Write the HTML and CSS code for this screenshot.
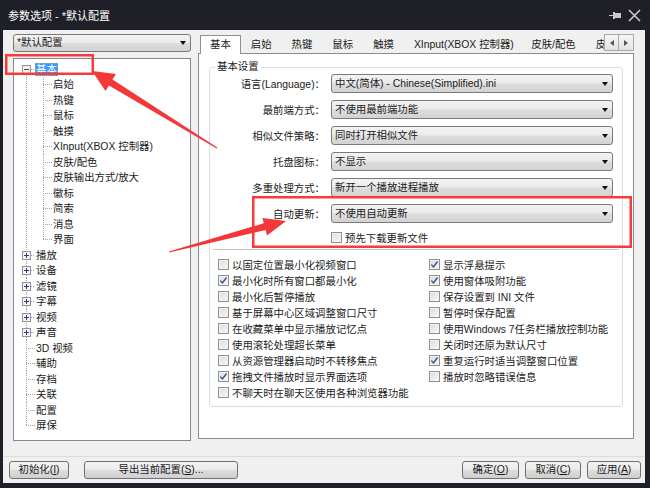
FILE: index.html
```html
<!DOCTYPE html>
<html lang="zh-CN">
<head>
<meta charset="utf-8">
<title>参数选项</title>
<link rel="stylesheet" href="styles.css">
</head>
<body>
<div class="window">
  <div class="titlebar">
    <span class="title">参数选项 - *默认配置</span>
    <span class="tb-icons">
      <svg class="pin" width="13" height="9" viewBox="0 0 13 9"><path d="M0 4.5h5" stroke="#c9c9c9" stroke-width="1"/><rect x="4" y="1" width="2" height="7" fill="#c9c9c9"/><rect x="6" y="2" width="6" height="5" fill="#c9c9c9"/></svg>
      <svg class="close" width="13" height="13" viewBox="0 0 13 13"><path d="M1 1L12 12M12 1L1 12" stroke="#d0d0d0" stroke-width="1.5"/></svg>
    </span>
  </div>
  <div class="client">
    <div class="main">
      <div class="leftcol">
        <div class="combo"><span>*默认配置</span><i class="caret"></i></div>
        <div class="tree">
          <ul class="t0">
            <li class="first">
              <div class="row"><span class="sp8"></span><svg class="exp" width="9" height="9" viewBox="0 0 9 9"><rect x=".5" y=".5" width="8" height="8" fill="#f3f3f3" stroke="#939393"/><path d="M2 4.5h5" stroke="#4a4a4a"/></svg><span class="h4"></span><span class="lbl sel">基本</span></div>
              <ul class="t1">
                <li><div class="row"><span class="sp29"></span><span class="h9"></span><span class="lbl">启始</span></div></li>
                <li><div class="row"><span class="sp29"></span><span class="h9"></span><span class="lbl">热键</span></div></li>
                <li><div class="row"><span class="sp29"></span><span class="h9"></span><span class="lbl">鼠标</span></div></li>
                <li><div class="row"><span class="sp29"></span><span class="h9"></span><span class="lbl">触摸</span></div></li>
                <li><div class="row"><span class="sp29"></span><span class="h9"></span><span class="lbl">XInput(XBOX 控制器)</span></div></li>
                <li><div class="row"><span class="sp29"></span><span class="h9"></span><span class="lbl">皮肤/配色</span></div></li>
                <li><div class="row"><span class="sp29"></span><span class="h9"></span><span class="lbl">皮肤输出方式/放大</span></div></li>
                <li><div class="row"><span class="sp29"></span><span class="h9"></span><span class="lbl">徽标</span></div></li>
                <li><div class="row"><span class="sp29"></span><span class="h9"></span><span class="lbl">简索</span></div></li>
                <li><div class="row"><span class="sp29"></span><span class="h9"></span><span class="lbl">消息</span></div></li>
                <li class="last"><div class="row"><span class="sp29"></span><span class="h9"></span><span class="lbl">界面</span></div></li>
              </ul>
            </li>
            <li><div class="row"><span class="sp8"></span><svg class="exp" width="9" height="9" viewBox="0 0 9 9"><rect x=".5" y=".5" width="8" height="8" fill="#f3f3f3" stroke="#939393"/><path d="M2 4.5h5M4.5 2v5" stroke="#22438c"/></svg><span class="h4"></span><span class="lbl">播放</span></div></li>
            <li><div class="row"><span class="sp8"></span><svg class="exp" width="9" height="9" viewBox="0 0 9 9"><rect x=".5" y=".5" width="8" height="8" fill="#f3f3f3" stroke="#939393"/><path d="M2 4.5h5M4.5 2v5" stroke="#22438c"/></svg><span class="h4"></span><span class="lbl">设备</span></div></li>
            <li><div class="row"><span class="sp8"></span><svg class="exp" width="9" height="9" viewBox="0 0 9 9"><rect x=".5" y=".5" width="8" height="8" fill="#f3f3f3" stroke="#939393"/><path d="M2 4.5h5M4.5 2v5" stroke="#22438c"/></svg><span class="h4"></span><span class="lbl">滤镜</span></div></li>
            <li><div class="row"><span class="sp8"></span><svg class="exp" width="9" height="9" viewBox="0 0 9 9"><rect x=".5" y=".5" width="8" height="8" fill="#f3f3f3" stroke="#939393"/><path d="M2 4.5h5M4.5 2v5" stroke="#22438c"/></svg><span class="h4"></span><span class="lbl">字幕</span></div></li>
            <li><div class="row"><span class="sp8"></span><svg class="exp" width="9" height="9" viewBox="0 0 9 9"><rect x=".5" y=".5" width="8" height="8" fill="#f3f3f3" stroke="#939393"/><path d="M2 4.5h5M4.5 2v5" stroke="#22438c"/></svg><span class="h4"></span><span class="lbl">视频</span></div></li>
            <li><div class="row"><span class="sp8"></span><svg class="exp" width="9" height="9" viewBox="0 0 9 9"><rect x=".5" y=".5" width="8" height="8" fill="#f3f3f3" stroke="#939393"/><path d="M2 4.5h5M4.5 2v5" stroke="#22438c"/></svg><span class="h4"></span><span class="lbl">声音</span></div></li>
            <li><div class="row"><span class="sp12"></span><span class="h9"></span><span class="lbl">3D 视频</span></div></li>
            <li><div class="row"><span class="sp12"></span><span class="h9"></span><span class="lbl">辅助</span></div></li>
            <li><div class="row"><span class="sp12"></span><span class="h9"></span><span class="lbl">存档</span></div></li>
            <li><div class="row"><span class="sp12"></span><span class="h9"></span><span class="lbl">关联</span></div></li>
            <li><div class="row"><span class="sp12"></span><span class="h9"></span><span class="lbl">配置</span></div></li>
            <li class="last"><div class="row"><span class="sp12"></span><span class="h9"></span><span class="lbl">屏保</span></div></li>
          </ul>
        </div>
      </div>
      <div class="rightcol">
        <div class="tabbar">
          <div class="tabs">
            <span class="tab active">基本</span>
            <span class="tab">启始</span>
            <span class="tab">热键</span>
            <span class="tab">鼠标</span>
            <span class="tab">触摸</span>
            <span class="tab tab-x">XInput(XBOX 控制器)</span>
            <span class="tab">皮肤/配色</span>
            <span class="tab">皮肤输出方式/放大</span>
          </div>
          <div class="tabscroll">
            <span class="sbtn"><svg width="4" height="6" viewBox="0 0 4 6"><path d="M4 0L0 3L4 6Z" fill="#555"/></svg></span>
            <span class="sbtn"><svg width="4" height="6" viewBox="0 0 4 6"><path d="M0 0L4 3L0 6Z" fill="#555"/></svg></span>
          </div>
        </div>
        <div class="panel">
          <div class="group">
            <div class="gtitle">基本设置</div>
            <div class="form">
              <div class="frow"><label>语言(Language)：</label><div class="select"><span>中文(简体) - Chinese(Simplified).ini</span><i class="caret"></i></div></div>
              <div class="frow"><label>最前端方式：</label><div class="select"><span>不使用最前端功能</span><i class="caret"></i></div></div>
              <div class="frow"><label>相似文件策略：</label><div class="select"><span>同时打开相似文件</span><i class="caret"></i></div></div>
              <div class="frow"><label>托盘图标：</label><div class="select"><span>不显示</span><i class="caret"></i></div></div>
              <div class="frow"><label>多重处理方式：</label><div class="select"><span>新开一个播放进程播放</span><i class="caret"></i></div></div>
              <div class="frow"><label>自动更新：</label><div class="select"><span>不使用自动更新</span><i class="caret"></i></div></div>
              <div class="cbrow"><span class="cb"></span><span>预先下载更新文件</span></div>
            </div>
            <div class="sep"></div>
            <div class="checks">
              <div class="ci"><span class="cb"></span><span>以固定位置最小化视频窗口</span></div>
              <div class="ci"><span class="cb on"><svg width="9" height="9" viewBox="0 0 9 9"><path d="M1.3 4.6l2.1 2.3 4.2-5.4" fill="none" stroke="#34508e" stroke-width="1.4"/></svg></span><span>显示浮悬提示</span></div>
              <div class="ci"><span class="cb on"><svg width="9" height="9" viewBox="0 0 9 9"><path d="M1.3 4.6l2.1 2.3 4.2-5.4" fill="none" stroke="#34508e" stroke-width="1.4"/></svg></span><span>最小化时所有窗口都最小化</span></div>
              <div class="ci"><span class="cb on"><svg width="9" height="9" viewBox="0 0 9 9"><path d="M1.3 4.6l2.1 2.3 4.2-5.4" fill="none" stroke="#34508e" stroke-width="1.4"/></svg></span><span>使用窗体吸附功能</span></div>
              <div class="ci"><span class="cb"></span><span>最小化后暂停播放</span></div>
              <div class="ci"><span class="cb"></span><span>保存设置到 INI 文件</span></div>
              <div class="ci"><span class="cb"></span><span>基于屏幕中心区域调整窗口尺寸</span></div>
              <div class="ci"><span class="cb"></span><span>暂停时保存配置</span></div>
              <div class="ci"><span class="cb"></span><span>在收藏菜单中显示播放记忆点</span></div>
              <div class="ci"><span class="cb"></span><span>使用Windows 7任务栏播放控制功能</span></div>
              <div class="ci"><span class="cb"></span><span>使用滚轮处理超长菜单</span></div>
              <div class="ci"><span class="cb"></span><span>关闭时还原为默认尺寸</span></div>
              <div class="ci"><span class="cb"></span><span>从资源管理器启动时不转移焦点</span></div>
              <div class="ci"><span class="cb on"><svg width="9" height="9" viewBox="0 0 9 9"><path d="M1.3 4.6l2.1 2.3 4.2-5.4" fill="none" stroke="#34508e" stroke-width="1.4"/></svg></span><span>重复运行时适当调整窗口位置</span></div>
              <div class="ci"><span class="cb on"><svg width="9" height="9" viewBox="0 0 9 9"><path d="M1.3 4.6l2.1 2.3 4.2-5.4" fill="none" stroke="#34508e" stroke-width="1.4"/></svg></span><span>拖拽文件播放时显示界面选项</span></div>
              <div class="ci"><span class="cb"></span><span>播放时忽略错误信息</span></div>
              <div class="ci"><span class="cb"></span><span>不聊天时在聊天区使用各种浏览器功能</span></div>
            </div>
          </div>
        </div>
      </div>
    </div>
    <div class="footer">
      <span class="btn w60">初始化(<u>I</u>)</span>
      <span class="btn w154 gap15">导出当前配置(<u>S</u>)...</span>
      <span class="btn w57 push">确定(<u>O</u>)</span>
      <span class="btn w56 gap6">取消(<u>C</u>)</span>
      <span class="btn w54 gap6">应用(<u>A</u>)</span>
    </div>
  </div>
</div>
<svg class="annot" width="650" height="488" viewBox="0 0 650 488">
  <g fill="none" stroke="#f53b3b" stroke-width="2.5">
    <rect x="6.25" y="55.25" width="86.5" height="18.5"/>
    <rect x="253.25" y="197.25" width="377.5" height="49.5"/>
  </g>
  <g fill="#f23838">
    <polygon points="92,71 115.9,73.9 112.5,79.4 217.3,147.6 216.7,148.4 108.9,85.4 105.5,90.9"/>
    <polygon points="286,221 262.4,218 263.8,223.3 168.9,251.5 169.1,252.5 265.6,230.1 267,235.4"/>
  </g>
</svg>
</body>
</html>
```

FILE: styles.css
```css
* { box-sizing: border-box; margin: 0; padding: 0; }
html, body { width: 650px; height: 488px; overflow: hidden; }
body {
  background: #1f2027;
  font-family: "Liberation Sans", "Noto Sans CJK SC", sans-serif;
  font-size: 10.4px;
  color: #1b1b1b;
  position: relative;
}
ul { list-style: none; }

.window { display: flex; flex-direction: column; height: 488px; }

.titlebar {
  height: 30px;
  display: flex;
  align-items: center;
  justify-content: space-between;
  padding: 0 9px 0 8px;
  color: #fff;
  font-size: 11px;
}
.tb-icons { display: flex; align-items: center; gap: 6px; }

.client {
  margin: 0 5px 5px 3px;
  height: 453px;
  background: #f0f0f0;
  display: flex;
  flex-direction: column;
}
.main {
  height: 426px;
  display: flex;
  gap: 7px;
  padding: 4px 11px 0 10px;
}

/* left column */
.leftcol { width: 178px; display: flex; flex-direction: column; }
.combo, .select {
  display: flex;
  align-items: center;
  border: 1px solid #7a7a7a;
  border-radius: 3px;
  background: linear-gradient(#f3f3f3, #ebebeb 48%, #dddddd 52%, #d3d3d3);
  padding-left: 3px;
  line-height: 14px;
  white-space: nowrap;
}
.combo { height: 18px; }
.caret {
  margin-left: auto;
  margin-right: 4px;
  width: 0;
  height: 0;
  border-left: 3.5px solid transparent;
  border-right: 3.5px solid transparent;
  border-top: 4px solid #111;
}

.tree {
  margin-top: 6px;
  height: 383px;
  border: 1px solid #828790;
  background: #fff;
  padding-top: 2.25px;
}
.row { height: 15.5px; display: flex; align-items: center; white-space: nowrap; }
.sp8 { width: 8px; flex: none; }
.sp12 { width: 12px; flex: none; }
.sp29 { width: 29px; flex: none; }
.exp { flex: none; display: block; }
.h4, .h9 {
  height: 1px;
  flex: none;
  background: repeating-linear-gradient(to right, #a3a3a3 0 1px, transparent 1px 2px);
}
.h4 { width: 4px; }
.h9 { width: 9px; }
.lbl { padding: 0 1px; line-height: 13px; }
.lbl.sel {
  background: #3399ff;
  color: #fff;
  outline: 1px dotted #c9a35a;
  outline-offset: -1px;
}
.t0 > li {
  background: repeating-linear-gradient(to bottom, #a3a3a3 0 1px, transparent 1px 2px) 12px 0 / 1px 100% no-repeat;
}
.t0 > li.first { background-position: 12px 8px; background-size: 1px calc(100% - 8px); }
.t0 > li.last { background-size: 1px 8px; }
.t1 > li {
  background: repeating-linear-gradient(to bottom, #a3a3a3 0 1px, transparent 1px 2px) 29px 0 / 1px 100% no-repeat;
}
.t1 > li.last { background-size: 1px 8px; }

/* right column */
.rightcol { width: 436px; display: flex; flex-direction: column; }
.tabbar {
  height: 20px;
  margin-bottom: -1px;
  display: flex;
  padding-left: 2px;
  position: relative;
  z-index: 1;
}
.tabs {
  flex: 1;
  display: flex;
  align-items: flex-end;
  overflow: hidden;
  white-space: nowrap;
}
.tab { flex: none; padding: 0 10px; line-height: 19px; height: 19px; }
.tab.tab-x { padding-right: 7.5px; }
.tab.active {
  background: #fff;
  border: 1px solid #8e8f8f;
  border-bottom: none;
  padding: 0 9px;
  line-height: 18px;
}
.tabscroll { display: flex; flex: none; height: 17px; }
.sbtn {
  width: 15px;
  height: 17px;
  display: flex;
  align-items: center;
  justify-content: center;
  border: 1px solid #a9a9a9;
  background: linear-gradient(#f6f6f6, #e3e3e3);
}
.sbtn + .sbtn { border-left: none; }

.panel {
  height: 386px;
  border: 1px solid #898c95;
  background: #fff;
}
.group {
  margin: 13px 10px 0;
  height: 340px;
  border: 1px solid #d5dfe5;
  border-radius: 3px;
}
.gtitle {
  width: max-content;
  margin: -8px 0 0 5px;
  padding: 0 2px;
  background: #fff;
  line-height: 14px;
}
.form { display: flex; flex-direction: column; gap: 7px; }
.frow { display: flex; align-items: center; height: 19px; }
.frow label { width: 115px; margin-right: 6px; text-align: right; white-space: nowrap; }
.select { width: 282px; height: 19px; }
.cbrow { height: 14px; display: flex; align-items: center; gap: 3px; padding-left: 121px; }
.sep { height: 1px; background: #c6c6c6; margin: 5px 3px 0; }
.checks {
  display: grid;
  grid-template-columns: 211px 1fr;
  grid-auto-rows: 16px;
  padding-left: 8px;
  margin-top: 6px;
}
.ci { display: flex; align-items: center; gap: 3px; white-space: nowrap; }
.cb {
  width: 11px;
  height: 11px;
  flex: none;
  border: 1px solid #8f8f8f;
  background: linear-gradient(135deg, #dcdcdc, #f7f7f7);
  box-shadow: inset 0 0 0 1px #f4f4f4;
  display: flex;
  align-items: center;
  justify-content: center;
}
.cb svg { display: block; }

/* footer */
.footer {
  height: 27px;
  border-top: 1px solid #dcdcdc;
  display: flex;
  align-items: center;
  padding: 0 4px 0 6px;
}
.btn {
  height: 18px;
  display: flex;
  align-items: center;
  justify-content: center;
  border: 1px solid #707070;
  border-radius: 3px;
  background: linear-gradient(#f2f2f2, #ebebeb 48%, #dddddd 52%, #cfcfcf);
  line-height: 14px;
  white-space: nowrap;
}
.btn u { text-decoration: underline; }
.w60 { width: 60px; }
.w154 { width: 154px; }
.w57 { width: 57px; }
.w56 { width: 56px; }
.w54 { width: 54px; }
.gap15 { margin-left: 15px; }
.gap6 { margin-left: 6px; }
.push { margin-left: auto; }

.annot { position: absolute; left: 0; top: 0; pointer-events: none; }
```
